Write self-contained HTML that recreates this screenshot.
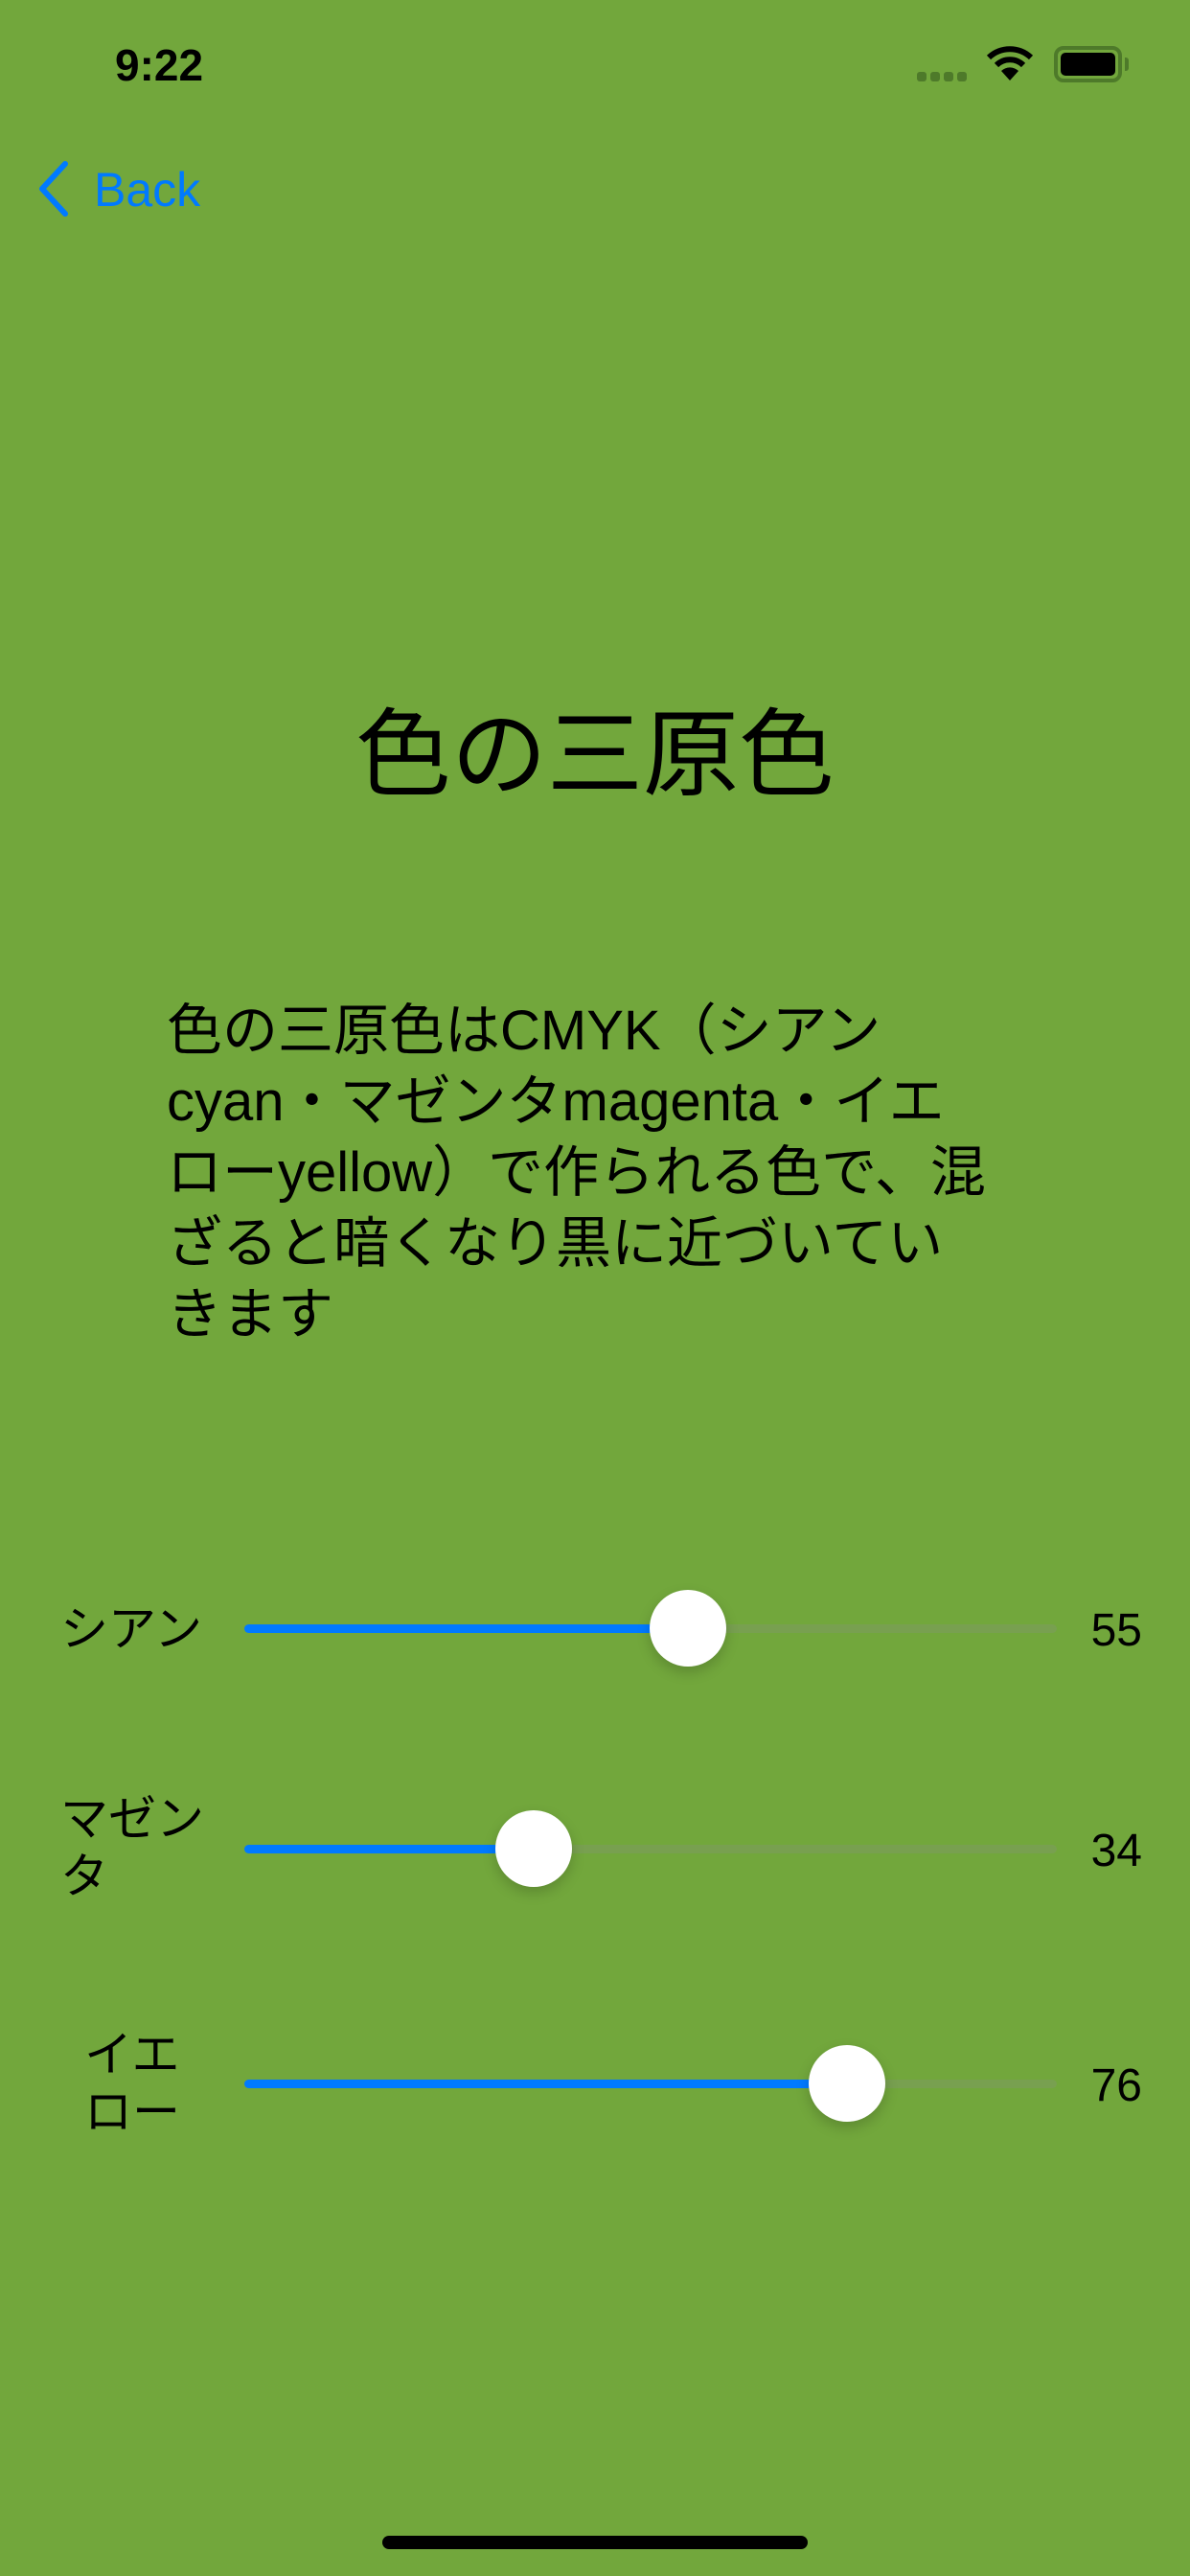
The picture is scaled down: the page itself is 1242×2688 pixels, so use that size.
<!DOCTYPE html>
<html><head><meta charset="utf-8"><style>
*{margin:0;padding:0;box-sizing:border-box}
body{width:1242px;height:2688px;background:#72a73c;position:relative;overflow:hidden;font-family:"Liberation Sans","Noto Sans CJK JP",sans-serif;color:#000}
.abs{position:absolute}
.line{position:absolute;left:174px;font-size:58px;line-height:74px;white-space:nowrap}
.track{position:absolute;left:255px;width:848px;height:9px;border-radius:5px;background:#78a050}
.fill{position:absolute;left:0;top:0;height:9px;border-radius:5px;background:#007aff}
.thumb{position:absolute;width:80px;height:80px;border-radius:50%;background:#fff;top:-36px;box-shadow:0 6px 14px rgba(0,0,0,.18)}
.lab{position:absolute;font-size:50px;line-height:60px;white-space:nowrap}
.val{position:absolute;right:50px;font-size:48px;line-height:60px}
</style></head><body>
<div class="abs" style="left:120px;top:38px;font-size:46px;font-weight:bold;line-height:60px">9:22</div>
<div class="abs" style="left:957px;top:75px;width:54px;height:10px;display:flex;gap:4px">
<div style="width:10px;height:10px;border-radius:3px;background:#4e7a2a"></div><div style="width:10px;height:10px;border-radius:3px;background:#4e7a2a"></div><div style="width:10px;height:10px;border-radius:3px;background:#4e7a2a"></div><div style="width:10px;height:10px;border-radius:3px;background:#4e7a2a"></div></div>
<svg class="abs" style="left:1030px;top:46px" width="48" height="40" viewBox="0 0 48 40"><path d="M2 14 A32 32 0 0 1 46 14" stroke="#000" stroke-width="6" fill="none"/><path d="M10 22 A20 20 0 0 1 38 22" stroke="#000" stroke-width="6" fill="none"/><path d="M24 38 L15 28 A13 13 0 0 1 33 28 Z" fill="#000"/></svg>
<div class="abs" style="left:1100px;top:48px;width:71px;height:38px;border:4px solid #4e7a2a;border-radius:10px;padding:3px"><div style="width:100%;height:100%;background:#000;border-radius:5px"></div></div>
<div class="abs" style="left:1174px;top:60px;width:4px;height:14px;background:#4e7a2a;border-radius:0 3px 3px 0"></div>
<svg class="abs" style="left:36px;top:166px" width="40" height="62" viewBox="0 0 40 62"><path d="M32 5 L8 31 L32 57" stroke="#007aff" stroke-width="6" fill="none" stroke-linecap="round" stroke-linejoin="round"/></svg>
<div class="abs" style="left:98px;top:168px;font-size:50px;line-height:60px;color:#007aff">Back</div>
<div class="abs" style="left:0;width:1242px;top:728px;text-align:center;font-size:100px;line-height:120px">色の三原色</div>
<div class="line" style="top:1039px">色の三原色はCMYK（シアン</div>
<div class="line" style="top:1113px">cyan・マゼンタmagenta・イエ</div>
<div class="line" style="top:1187px">ローyellow）で作られる色で、混</div>
<div class="line" style="top:1261px">ざると暗くなり黒に近づいてい</div>
<div class="line" style="top:1335px">きます</div>

<div class="lab" style="left:63px;top:1670px">シアン</div>
<div class="track" style="top:1695px"><div class="fill" style="width:463px"></div><div class="thumb" style="left:423px"></div></div>
<div class="val" style="top:1672px">55</div>

<div class="lab" style="left:63px;top:1868px">マゼン<br>タ</div>
<div class="track" style="top:1925px"><div class="fill" style="width:302px"></div><div class="thumb" style="left:262px"></div></div>
<div class="val" style="top:1902px">34</div>

<div class="lab" style="left:88px;top:2114px">イエ<br>ロー</div>
<div class="track" style="top:2170px"><div class="fill" style="width:629px"></div><div class="thumb" style="left:589px"></div></div>
<div class="val" style="top:2147px">76</div>

<div class="abs" style="left:399px;top:2646px;width:444px;height:14px;border-radius:7px;background:#000"></div>
</body></html>
